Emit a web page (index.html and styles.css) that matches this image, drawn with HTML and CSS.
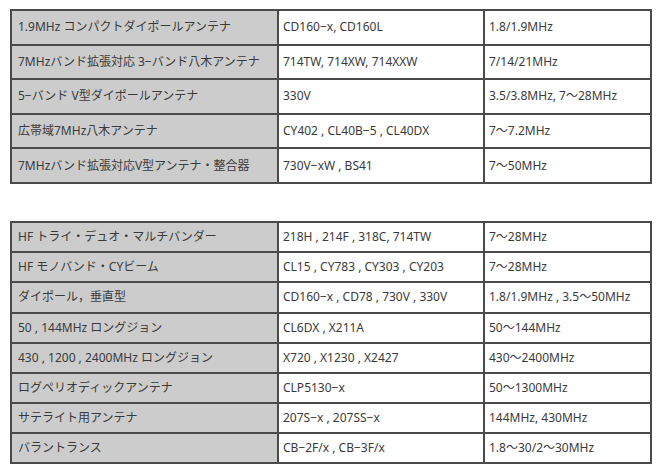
FILE: index.html
```html
<!DOCTYPE html>
<html lang="ja">
<head>
<meta charset="utf-8">
<title>アンテナ一覧</title>
<link rel="stylesheet" href="styles.css">
</head>
<body>
<div class="page">
  <table class="spec spec-large">
    <colgroup><col class="c1"><col class="c2"><col class="c3"></colgroup>
    <tr><td class="name">1.9MHz コンパクトダイポールアンテナ</td><td>CD160−x, CD160L</td><td>1.8/1.9MHz</td></tr>
    <tr><td class="name">7MHzバンド拡張対応 3−バンド八木アンテナ</td><td>714TW, 714XW, 714XXW</td><td>7/14/21MHz</td></tr>
    <tr><td class="name">5−バンド V型ダイポールアンテナ</td><td>330V</td><td>3.5/3.8MHz, 7〜28MHz</td></tr>
    <tr><td class="name">広帯域7MHz八木アンテナ</td><td>CY402 , CL40B−5 , CL40DX</td><td>7〜7.2MHz</td></tr>
    <tr><td class="name">7MHzバンド拡張対応V型アンテナ・整合器</td><td>730V−xW , BS41</td><td>7〜50MHz</td></tr>
  </table>

  <table class="spec spec-small">
    <colgroup><col class="c1"><col class="c2"><col class="c3"></colgroup>
    <tr><td class="name">HF トライ・デュオ・マルチバンダー</td><td>218H , 214F , 318C, 714TW</td><td>7〜28MHz</td></tr>
    <tr><td class="name">HF モノバンド・CYビーム</td><td>CL15 , CY783 , CY303 , CY203</td><td>7〜28MHz</td></tr>
    <tr><td class="name">ダイポール，垂直型</td><td>CD160−x , CD78 , 730V , 330V</td><td>1.8/1.9MHz , 3.5〜50MHz</td></tr>
    <tr><td class="name">50 , 144MHz ロングジョン</td><td>CL6DX , X211A</td><td>50〜144MHz</td></tr>
    <tr><td class="name">430 , 1200 , 2400MHz ロングジョン</td><td>X720 , X1230 , X2427</td><td>430〜2400MHz</td></tr>
    <tr><td class="name">ログペリオディックアンテナ</td><td>CLP5130−x</td><td>50〜1300MHz</td></tr>
    <tr><td class="name">サテライト用アンテナ</td><td>207S−x , 207SS−x</td><td>144MHz, 430MHz</td></tr>
    <tr><td class="name">バラントランス</td><td>CB−2F/x , CB−3F/x</td><td>1.8〜30/2〜30MHz</td></tr>
  </table>
</div>
</body>
</html>
```

FILE: styles.css
```css
html, body {
  margin: 0;
  padding: 0;
  background: #ffffff;
}

.page {
  padding: 9px 0 0 10px;
  font-family: "Noto Sans", "Noto Sans CJK JP", sans-serif;
  font-size: 12px;
  color: #3a3a3a;
}

.spec {
  width: 640px;
  table-layout: fixed;
  border-collapse: collapse;
  border: 2px solid #4a4a4a;
}

.spec + .spec {
  margin-top: 37px;
}

.c1 { width: 267px; }
.c2 { width: 206px; }
.c3 { width: 167px; }

.spec td {
  border: 2px solid #4a4a4a;
  padding: 0 4px;
  line-height: 16px;
  white-space: nowrap;
  vertical-align: middle;
  background: #ffffff;
}

.spec td.name {
  background: #cccccc;
  padding-left: 6px;
}

.spec-large td {
  height: 32.6px;
}

.spec-small td {
  height: 28.2px;
}
```
